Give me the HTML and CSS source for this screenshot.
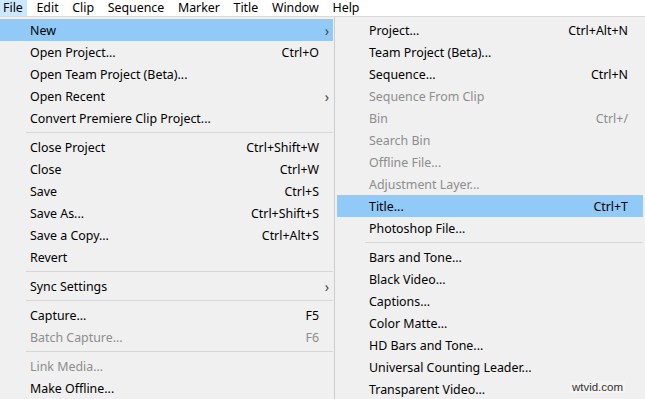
FILE: index.html
```html
<!DOCTYPE html>
<html lang="en">
<head>
    <meta charset="UTF-8">
    <meta name="viewport" content="width=device-width, initial-scale=1.0">
    <title>File Menu</title>
    <link rel="stylesheet" href="styles.css">
</head>
<body>
    <div class="menubar">
        <span class="bar-item active">File</span>
        <span class="bar-item">Edit</span>
        <span class="bar-item">Clip</span>
        <span class="bar-item">Sequence</span>
        <span class="bar-item">Marker</span>
        <span class="bar-item">Title</span>
        <span class="bar-item">Window</span>
        <span class="bar-item">Help</span>
    </div>

    <div class="menus">
        <ul class="menu main-menu">
            <li class="item selected"><span>New</span><span class="arrow">&#8250;</span></li>
            <li class="item"><span>Open Project...</span><span class="key">Ctrl+O</span></li>
            <li class="item"><span>Open Team Project (Beta)...</span></li>
            <li class="item"><span>Open Recent</span><span class="arrow">&#8250;</span></li>
            <li class="item"><span>Convert Premiere Clip Project...</span></li>
            <li class="sep"></li>
            <li class="item"><span>Close Project</span><span class="key">Ctrl+Shift+W</span></li>
            <li class="item"><span>Close</span><span class="key">Ctrl+W</span></li>
            <li class="item"><span>Save</span><span class="key">Ctrl+S</span></li>
            <li class="item"><span>Save As...</span><span class="key">Ctrl+Shift+S</span></li>
            <li class="item"><span>Save a Copy...</span><span class="key">Ctrl+Alt+S</span></li>
            <li class="item"><span>Revert</span></li>
            <li class="sep"></li>
            <li class="item"><span>Sync Settings</span><span class="arrow">&#8250;</span></li>
            <li class="sep"></li>
            <li class="item"><span>Capture...</span><span class="key">F5</span></li>
            <li class="item disabled"><span>Batch Capture...</span><span class="key">F6</span></li>
            <li class="sep"></li>
            <li class="item disabled"><span>Link Media...</span></li>
            <li class="item"><span>Make Offline...</span></li>
        </ul>

        <ul class="menu sub-menu">
            <li class="item"><span>Project...</span><span class="key">Ctrl+Alt+N</span></li>
            <li class="item"><span>Team Project (Beta)...</span></li>
            <li class="item"><span>Sequence...</span><span class="key">Ctrl+N</span></li>
            <li class="item disabled"><span>Sequence From Clip</span></li>
            <li class="item disabled"><span>Bin</span><span class="key">Ctrl+/</span></li>
            <li class="item disabled"><span>Search Bin</span></li>
            <li class="item disabled"><span>Offline File...</span></li>
            <li class="item disabled"><span>Adjustment Layer...</span></li>
            <li class="item selected"><span>Title...</span><span class="key">Ctrl+T</span></li>
            <li class="item"><span>Photoshop File...</span></li>
            <li class="sep"></li>
            <li class="item"><span>Bars and Tone...</span></li>
            <li class="item"><span>Black Video...</span></li>
            <li class="item"><span>Captions...</span></li>
            <li class="item"><span>Color Matte...</span></li>
            <li class="item"><span>HD Bars and Tone...</span></li>
            <li class="item"><span>Universal Counting Leader...</span></li>
            <li class="item"><span>Transparent Video...</span></li>
        </ul>
    </div>

    <div class="watermark">wtvid.com</div>
</body>
</html>
```

FILE: styles.css
```css
body {
    margin: 0;
    font-family: "Noto Sans", "Liberation Sans", sans-serif;
    font-size: 12.4px;
    color: #000;
    background-color: #f0f0f0;
    height: 399px;
    overflow: hidden;
    position: relative;
}

.menubar {
    display: flex;
    height: 16px;
    background-color: #fff;
    border-bottom: 1px solid #d9d9d9;
    line-height: 16px;
}

.bar-item {
    padding: 0 4px 0 3px;
    margin-right: 6.6px;
}

.bar-item.active {
    background-color: #cce8ff;
}

.menus {
    display: flex;
    align-items: flex-start;
}

.menu {
    list-style: none;
    margin: 0;
    padding: 2px;
    background-color: #f0f0f0;
}

.main-menu {
    width: 333px;
    padding-left: 0;
    padding-right: 1px;
    border-right: 1px solid #cccccc;
}

.sub-menu {
    flex: 1;
    padding-left: 2px;
}

.item {
    display: flex;
    justify-content: space-between;
    align-items: center;
    height: 22px;
    padding: 0 14px 0 30px;
}

.sub-menu .item {
    padding-left: 32px;
    padding-right: 15px;
}

.item.selected {
    background-color: #91c9f7;
}

.item.disabled {
    color: #8d8d8d;
}

.arrow {
    margin-right: -10px;
    font-size: 14px;
    color: #444;
}

.sep {
    height: 1px;
    margin: 3px 0 3px 26px;
    background-color: #d7d7d7;
}

.sub-menu .sep {
    margin-left: 28px;
}

.watermark {
    position: absolute;
    right: 20px;
    bottom: 6px;
    padding: 0 2px;
    font-family: "Liberation Sans", Arial, sans-serif;
    font-size: 11.5px;
    color: #333;
    background-color: #f4f4f4;
}
```
